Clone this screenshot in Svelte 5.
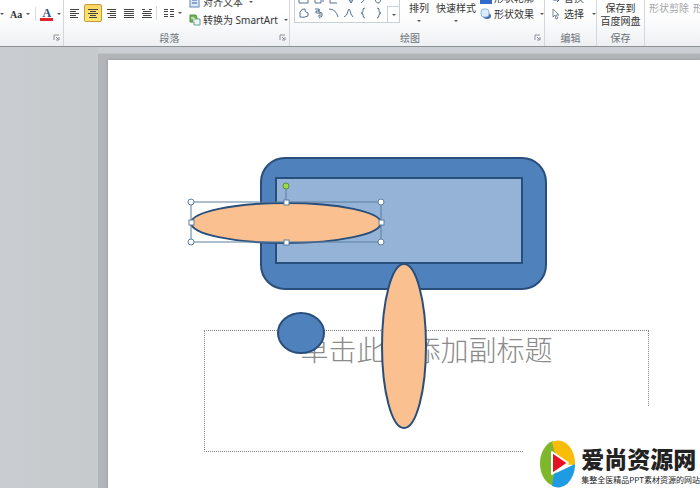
<script lang="ts">
	const alignments = [
		{ name: 'Left', icon: 'M0 1h9M0 3h6M0 5h9M0 7h6M0 9h8' },
		{ name: 'Center', icon: 'M0 1h10M2 3h6M0 5h10M2 7h6M1 9h8' },
		{ name: 'Right', icon: 'M1 1h9M4 3h6M1 5h9M4 7h6M2 9h8' },
		{ name: 'Justify', icon: 'M0 1h10M0 3h10M0 5h10M0 7h10M0 9h10' },
		{ name: 'Distribute', icon: 'M0 1h3M7 1h3M1 3h8M0 5h10M1 7h8M0 9h10' }
	];

	const gallery = [
		'M2 3h5l3 2v5H1V5z',
		'M2 4h6v6H2zM8 4l2-1v6',
		'M2 3v7h7',
		'M2 5h6v4M6 7l2 3 2-3',
		'M7 3q0 5-4 7',
		'M2 3q0 7 3 7t3-7',
		'M2 10V5q2-4 5-3-1 3 3 4v3q-4 2-8 1z',
		'M2 2h4v2H3v2h4v3H5M6 2v3l3 1v3l-3 2',
		'M1 2q7 0 9 8',
		'M1 10q3-1 4-6t3 3l2 3',
		'M7 1q-3 0-2 3 0 2-2 2 2 0 2 2 0 3 2 3',
		'M4 1q3 0 2 3 0 2 2 2-2 0-2 2 0 3-2 3'
	];

	const handles = [83, 178, 273].flatMap((x) => [142, 162, 182].map((y) => ({ x, y })))
		.filter((h) => !(h.x === 178 && h.y === 162));

	let align = $state('Center');
</script>

{#snippet launcher()}
	<button class="launcher" aria-label="More options">
		<svg width="7" height="7" viewBox="0 0 7 7"><path d="M1 6V1h5M3 3l3 3M6 3v3H3" /></svg>
	</button>
{/snippet}

<div class="app">
	<header class="ribbon">
		<section class="group font">
			<div class="tools font-tools">
				<i class="caret"></i>
				<button class="case">Aa<i class="caret"></i></button>
				<span class="rule"></span>
				<button class="color" aria-label="Font color">
					<span>A</span>
				</button>
				<i class="caret"></i>
			</div>
			<footer>{@render launcher()}</footer>
		</section>

		<section class="group paragraph">
			<div class="tools">
				<div class="aligns">
					{#each alignments as item}
						<button class="align" class:active={align === item.name} aria-label={item.name} onclick={() => (align = item.name)}>
							<svg width="10" height="10" viewBox="0 0 10 10"><path d={item.icon} /></svg>
						</button>
					{/each}
					<span class="rule"></span>
					<button class="align columns" aria-label="Columns">
						<svg width="10" height="10" viewBox="0 0 10 10"><path d="M0 1h4M6 1h4M0 3h4M6 3h4M0 6h4M6 6h4M0 8h4M6 8h4" /></svg>
						<i class="caret"></i>
					</button>
				</div>
				<div class="stack wide">
					<button class="item">
						<svg width="12" height="12" viewBox="0 0 12 12"><rect x="1" y="1" width="9" height="10" fill="#dce9f8" stroke="#5c83b8" /><path d="M3 4h5M3 7h5" stroke="#2f5fa8" /></svg>
						对齐文本<i class="caret"></i>
					</button>
					<button class="item">
						<svg width="12" height="12" viewBox="0 0 12 12"><path d="M1 1h6l1 3v4H1z" fill="#74b35a" stroke="#4d9140" /><path d="M5 5h6v6H5z" fill="#edf6fb" stroke="#68a28c" /><path d="M2 4h3v4" fill="none" stroke="#fff" /></svg>
						转换为 SmartArt<i class="caret"></i>
					</button>
				</div>
			</div>
			<footer class="with-launcher">段落{@render launcher()}</footer>
		</section>

		<section class="group drawing">
			<div class="tools">
				<div class="gallery">
					<div class="shapes">
						{#each gallery as d}
							<button aria-label="Shape"><svg width="11" height="12" viewBox="0 0 11 12"><path {d} /></svg></button>
						{/each}
					</div>
					<button class="more" aria-label="More shapes"><i class="caret"></i></button>
				</div>
				<button class="big">排列<i class="caret"></i></button>
				<button class="big">快速样式<i class="caret"></i></button>
				<div class="stack">
					<button class="item">
						<svg width="12" height="12" viewBox="0 0 12 12"><path d="M2 6l6-5 2 2-5 5z" fill="#fff" stroke="#777" /><path d="M0 8h12v4H0z" fill="#3269cc" /></svg>
						形状轮廓<i class="caret"></i>
					</button>
					<button class="item">
						<svg width="12" height="12" viewBox="0 0 12 12"><ellipse cx="7" cy="8" rx="4" ry="3" fill="#456fac" /><rect x="1" y="1" width="8" height="8" rx="3" fill="#dcecff" stroke="#91b3dc" /></svg>
						形状效果<i class="caret"></i>
					</button>
				</div>
			</div>
			<footer class="with-launcher">绘图{@render launcher()}</footer>
		</section>

		<section class="group editing">
			<div class="tools">
				<div class="stack">
					<button class="item">
						<svg width="8" height="12" viewBox="0 0 8 12"><path d="M1 8h6M5 6l2 2-2 2" fill="none" stroke="#4a5f80" /></svg>
						替换<i class="caret"></i>
					</button>
					<button class="item">
						<svg width="8" height="12" viewBox="0 0 8 12"><path d="M1 1v8l2-2 1 4 2-1-2-3h3z" fill="#fff" stroke="#7b8795" /></svg>
						选择<i class="caret"></i>
					</button>
				</div>
			</div>
			<footer>编辑</footer>
		</section>

		<section class="group saving">
			<div class="tools">
				<button class="big">保存到<br />百度网盘</button>
			</div>
			<footer>保存</footer>
		</section>

		<section class="group extra">
			<div class="tools">
				<button class="big" disabled>形状剪除</button>
				<button class="big" disabled>形状组合</button>
			</div>
			<footer></footer>
		</section>
	</header>

	<main class="workspace">
		<div class="slide">
			<div class="placeholder">单击此处添加副标题</div>
			<svg class="canvas" aria-hidden="true">
				<g stroke="#284e7b" stroke-width="2">
					<rect x="153" y="98" width="285" height="131" rx="24" fill="#4f81bd" />
					<rect x="168" y="118" width="246" height="85" fill="#95b3d7" />
					<ellipse cx="193" cy="273" rx="23" ry="20" fill="#4f81bd" />
					<ellipse cx="296" cy="286" rx="22" ry="82" fill="#fac090" />
					<ellipse cx="178" cy="163" rx="95" ry="20" fill="#fac090" />
				</g>
				<g class="selection">
					<rect x="83" y="142" width="190" height="40" />
					<path d="M178 142v-16" />
					{#each handles as h}
						{#if h.x === 178 || h.y === 162}
							<rect class="handle" x={h.x - 2} y={h.y - 2} width="5" height="5" />
						{:else}
							<circle class="handle" cx={h.x} cy={h.y} r="3" />
						{/if}
					{/each}
					<circle class="rotate" cx="178" cy="126" r="3" />
				</g>
			</svg>
		</div>

		<aside class="brand">
			<svg width="36" height="48" viewBox="0 0 36 48">
				<path d="M18 24L13 1A17 23 0 0 0 14 46z" fill="#7fb72c" />
				<path d="M18 24L12 2A17 23 0 0 1 35 25z" fill="#f9bd09" />
				<path d="M14 34L35 24A17 23 0 0 1 12 46z" fill="#1e9be2" />
				<path d="M12 12v22l16-11z" fill="#e60f24" stroke="#fff" stroke-width="2" stroke-linejoin="round" />
			</svg>
			<div class="brand-text">
				<strong>爱尚资源网</strong>
				<small>集整全医精品PPT素材资源的网站</small>
			</div>
		</aside>
	</main>
</div>

<style>
	:global(body) {
		margin: 0;
	}

	.app {
		display: flex;
		flex-direction: column;
		height: 100vh;
		overflow: hidden;
		font-family: "Noto Sans", "Noto Sans CJK SC", sans-serif;
		font-size: 10px;
		line-height: 13px;
		color: #333;
	}

	button {
		display: flex;
		align-items: center;
		padding: 0;
		border: 0;
		background: none;
		font: inherit;
		color: inherit;
		white-space: nowrap;
	}

	svg {
		display: block;
		flex-shrink: 0;
	}

	.ribbon {
		display: flex;
		flex-shrink: 0;
		height: 46px;
		overflow: hidden;
		background: linear-gradient(#fff 30%, #edf0f3);
		border-bottom: 1px solid #8d9297;
	}

	.group {
		display: flex;
		flex-direction: column;
		justify-content: flex-end;
		flex-shrink: 0;
		box-sizing: border-box;
		border-right: 1px solid #d3d7dc;
	}

	.font { width: 64px; }
	.paragraph { width: 226px; }
	.drawing { width: 255px; }
	.editing { width: 52px; }
	.saving { width: 48px; }
	.extra { flex: 1; border: 0; }

	footer {
		position: relative;
		height: 14px;
		flex-shrink: 0;
		text-align: center;
		color: #6b7178;
	}

	.with-launcher {
		padding-right: 14px;
	}

	.launcher {
		position: absolute;
		right: 3px;
		top: 2px;
	}

	.launcher path {
		fill: none;
		stroke: #8a929b;
	}

	.tools {
		display: flex;
		align-items: flex-end;
	}

	.caret {
		flex-shrink: 0;
		margin-left: 4px;
		border: 2px solid transparent;
		border-top-color: #555;
		border-bottom: 0;
	}

	.rule {
		width: 1px;
		height: 14px;
		background: #d9dcdf;
	}

	.font-tools {
		align-items: center;
		height: 18px;
		padding-bottom: 9px;
	}

	.font-tools > .caret:first-child {
		margin-left: 0;
	}

	.case {
		margin: 0 5px 0 6px;
		font-family: "Liberation Serif", serif;
		font-weight: bold;
	}

	.color {
		margin-left: 4px;
		border-bottom: 3px solid #e2232a;
	}

	.color span {
		width: 13px;
		height: 10px;
		font: bold 12px/10px "Liberation Serif", serif;
		color: #2c4f80;
	}

	.aligns {
		display: flex;
		align-items: center;
		padding: 0 0 10px 2px;
	}

	.align {
		justify-content: center;
		box-sizing: border-box;
		width: 18px;
		height: 18px;
		border: 1px solid transparent;
		border-radius: 2px;
	}

	.align path {
		stroke: #444;
		fill: none;
		shape-rendering: crispEdges;
	}

	.align.active {
		border-color: #c79a3e;
		background: linear-gradient(#fbd765, #ffe66f);
	}

	.columns {
		width: 24px;
		margin-left: 4px;
	}

	.stack .item {
		height: 16px;
		gap: 2px;
	}

	.stack {
		padding-bottom: 10px;
	}

	.stack.wide {
		padding: 0 0 3px 4px;
	}

	.wide .item {
		height: 18px;
	}

	.gallery {
		display: flex;
		margin: 0 6px 9px 4px;
		border: 1px solid #c9d0d8;
		background: #fff;
	}

	.shapes {
		display: grid;
		grid-template-columns: repeat(6, 15px);
		grid-auto-rows: 14px;
		padding: 2px 1px;
	}

	.shapes button {
		justify-content: center;
	}

	.shapes path {
		fill: none;
		stroke: #56718f;
	}

	.more {
		width: 12px;
		height: 16px;
		align-self: flex-end;
		justify-content: center;
		border: solid #c9d0d8;
		border-width: 1px 0 0 1px;
	}

	.more .caret,
	.big .caret {
		margin-left: 0;
	}

	.big {
		flex-direction: column;
		gap: 5px;
		margin: 0 4px 10px;
	}

	.drawing .big {
		margin: 0 4px 10px 3px;
	}

	.saving .big {
		margin: 0 auto 4px;
	}

	.extra .big {
		margin: 0 0 17px 4px;
		color: #a2a5a8;
	}

	.editing .stack {
		padding-left: 7px;
	}

	.editing .item {
		gap: 4px;
	}

	.workspace {
		position: relative;
		display: flex;
		flex: 1;
		padding: 13px 0 0 108px;
		background: linear-gradient(90deg, #c9cdd1, #c6cacd 98px, transparent 98px), linear-gradient(#cbced2 6px, #b1b5b8 7px);
	}

	.slide {
		position: relative;
		flex: 1;
		overflow: hidden;
		background: #fff;
		box-shadow: 0 0 3px #8e9296;
	}

	.placeholder {
		position: absolute;
		left: 96px;
		top: 270px;
		box-sizing: border-box;
		width: 445px;
		height: 122px;
		border: 1px dotted #888;
		font-family: "Noto Sans CJK SC", sans-serif;
		font-weight: 300;
		font-size: 28px;
		line-height: 36px;
		text-align: center;
		color: #8b8b8b;
	}

	.canvas {
		position: absolute;
		inset: 0;
		width: 100%;
		height: 100%;
	}

	.selection rect,
	.selection path,
	.selection circle {
		fill: none;
		stroke: #5c7f9f;
	}

	.selection .handle {
		fill: #fff;
	}

	.selection .rotate {
		fill: #9bdc4c;
		stroke: #5c8f3c;
	}

	.brand {
		position: absolute;
		right: 0;
		bottom: 0;
		display: flex;
		align-items: flex-end;
		gap: 5px;
		padding: 34px 0 0 16px;
		background: #fff;
	}

	.brand-text {
		display: flex;
		flex-direction: column;
		font-family: "Noto Sans CJK SC", sans-serif;
		color: #222;
	}

	.brand strong {
		font-size: 23px;
		font-weight: 900;
		line-height: 28px;
	}

	.brand small {
		font-size: 8px;
		line-height: 16px;
		white-space: nowrap;
	}
</style>
